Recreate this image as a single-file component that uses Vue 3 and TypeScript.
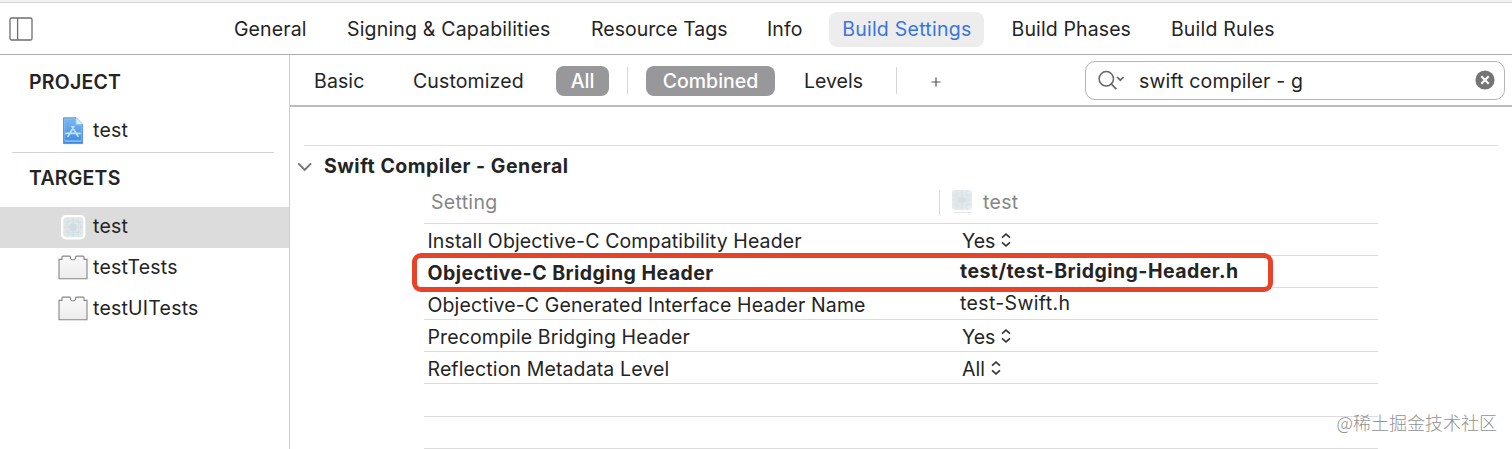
<script setup lang="ts">
interface Tab { label: string; key: string; active?: boolean }
interface Setting { name: string; value: string; popup: boolean; strong?: boolean; key: string }

const tabs: Tab[] = [
  { label: 'General', key: 'general' },
  { label: 'Signing & Capabilities', key: 'signing' },
  { label: 'Resource Tags', key: 'resource' },
  { label: 'Info', key: 'info' },
  { label: 'Build Settings', key: 'settings', active: true },
  { label: 'Build Phases', key: 'phases' },
  { label: 'Build Rules', key: 'rules' },
]

const settings: Setting[] = [
  { name: 'Install Objective-C Compatibility Header', value: 'Yes', popup: true, key: 'install' },
  { name: 'Objective-C Bridging Header', value: 'test/test-Bridging-Header.h', popup: false, strong: true, key: 'bridging' },
  { name: 'Objective-C Generated Interface Header Name', value: 'test-Swift.h', popup: false, key: 'generated' },
  { name: 'Precompile Bridging Header', value: 'Yes', popup: true, key: 'precompile' },
  { name: 'Reflection Metadata Level', value: 'All', popup: true, key: 'reflection' },
]

const bundles: string[] = ['testTests', 'testUITests']
</script>

<template>
  <div class="window">
    <header class="topbar">
      <svg class="panel-icon" width="24" height="24" viewBox="0 0 24 24" fill="none" stroke="#6f6f6f" stroke-width="1.3">
        <rect x="1" y="1" width="22" height="22" rx="1.6" />
        <path d="M8.6 1v22" />
      </svg>
      <nav class="tabs">
        <span v-for="t in tabs" :key="t.key" class="tab" :class="[t.key, { active: t.active }]">{{ t.label }}</span>
      </nav>
    </header>

    <div class="body">
      <aside class="sidebar">
        <div class="heading project">PROJECT</div>
        <div class="item first">
          <svg class="icon" width="28" height="28" viewBox="0 0 28 28">
            <defs>
              <linearGradient id="doc" x1="0" y1="0" x2="0" y2="1">
                <stop offset="0" stop-color="#7dbaf0" />
                <stop offset="1" stop-color="#3a88e0" />
              </linearGradient>
            </defs>
            <path d="M4.5 .8h12.8l6.3 6.4v19.4H4.5z" fill="url(#doc)" stroke="#4c88c8" stroke-width=".8" />
            <path d="M5.7 2h10.9v6.2h5.8v15.6H5.7z" fill="none" stroke="#8fc4f5" stroke-width=".6" />
            <path d="M17.3.8v6.4h6.3z" fill="#dcecfb" />
            <path d="M5.6 24.2h17" stroke="#a9d0f5" stroke-width=".9" />
            <path d="M14.8 9.6 9 19.4M13 9.6 19 19.4M7 16.4h14" fill="none" stroke="#c6e2fb" stroke-width="1.7" stroke-linecap="round" />
          </svg>
          <span>test</span>
        </div>
        <div class="separator"></div>
        <div class="heading targets">TARGETS</div>
        <div class="item selected">
          <svg class="icon" width="28" height="28" viewBox="0 0 28 28">
            <rect x="2" y="2" width="24.4" height="24.4" rx="5" fill="#fff" />
            <rect x="4.2" y="4.2" width="20" height="20" rx="3" fill="#e2e8ea" />
            <g fill="none" stroke="#cfdbe0" stroke-width=".6">
              <path d="M4.2 9h20M4.2 19.4h20M9 4.2v20M19.4 4.2v20M14.2 4.2v20M4.2 14.2h20" />
              <circle cx="14.2" cy="14.2" r="7.5" /><circle cx="14.2" cy="14.2" r="4" />
            </g>
            <rect x="11" y="11" width="6.4" height="6.4" rx="2" fill="#cfdbe0" />
          </svg>
          <span>test</span>
        </div>
        <div v-for="b in bundles" :key="b" class="item bundle">
          <svg class="brick" width="30" height="25" viewBox="0 0 30 25">
            <defs>
              <linearGradient id="brick" x1="0" y1="0" x2="0" y2="1">
                <stop offset="0" stop-color="#fafafa" />
                <stop offset="1" stop-color="#ececec" />
              </linearGradient>
            </defs>
            <path d="M1 4.4h3V2.1Q4 1.1 5 1.1h6.5q1 0 1 1v1.5l1.2 1.2h2.6l1.2-1.2V2.1q0-1 1-1H25q1 0 1 1v2.3h3v19.4H1z" fill="url(#brick)" stroke="#858585" stroke-width="1.1" />
          </svg>
          <span>{{ b }}</span>
        </div>
      </aside>

      <main class="editor">
        <div class="filters">
          <span class="filter basic">Basic</span>
          <span class="filter customized">Customized</span>
          <span class="pill all">All</span>
          <i class="bar"></i>
          <span class="pill combined">Combined</span>
          <span class="filter levels">Levels</span>
          <i class="bar"></i>
          <svg class="plus" width="10" height="10" viewBox="0 0 10 10"><path d="M5 .5v9M.5 5h9" stroke="#555" stroke-width="1.2" /></svg>
          <div class="search">
            <svg class="lens" width="28" height="22" viewBox="0 0 28 22" fill="none" stroke="#666">
              <circle cx="9.3" cy="9.8" r="7.2" stroke-width="1.5" />
              <path d="m14.4 15 4.9 5.2" stroke-width="1.8" />
              <path d="m20 8 3.3 3.2L26.6 8" stroke-width="1.7" />
            </svg>
            <span class="query">swift compiler - g</span>
            <svg class="clear" width="20" height="20" viewBox="0 0 20 20">
              <circle cx="10" cy="10" r="9.6" fill="#757575" />
              <path d="m6.3 6.3 7.4 7.4M13.7 6.3l-7.4 7.4" stroke="#fff" stroke-width="2" />
            </svg>
          </div>
        </div>

        <div class="section-title">
          <svg width="16" height="10" viewBox="0 0 16 10"><path d="m1.3 1.3 6.4 6.6 6.4-6.6" fill="none" stroke="#737373" stroke-width="1.9" /></svg>
          <span class="title">Swift Compiler - General</span>
        </div>

        <div class="table">
          <div class="row head">
            <span class="name">Setting</span>
            <span class="target">
              <svg width="22" height="24" viewBox="0 0 22 24">
                <rect x="1" y="0" width="20" height="20" rx="3" fill="#e6ecee" />
                <g fill="none" stroke="#d3dfe3" stroke-width=".6">
                  <path d="M1 5h20M1 15h20M6 0v20M16 0v20M11 0v20M1 10h20" />
                  <circle cx="11" cy="10" r="7.5" /><circle cx="11" cy="10" r="4" />
                </g>
                <rect x="8" y="7" width="6" height="6" rx="2" fill="#d5e0e4" />
                <path d="M2 22.5h18" stroke="#e6e6e6" />
              </svg>
              <span class="target-name">test</span>
            </span>
          </div>
          <div v-for="s in settings" :key="s.key" class="row" :class="{ strong: s.strong }">
            <span class="name">{{ s.name }}</span>
            <span class="value" :class="{ popup: s.popup }">
              <span>{{ s.value }}</span>
              <svg v-if="s.popup" width="10" height="14" viewBox="0 0 10 14"><path d="m1 4.6 4-3.5 4 3.5M1 9.4l4 3.5 4-3.5" fill="none" stroke="#333" stroke-width="1.6" /></svg>
            </span>
            <i v-if="s.strong" class="highlight"></i>
          </div>
          <div class="row"></div>
          <div class="row"></div>
        </div>
      </main>
    </div>
    <div class="watermark">@稀土掘金技术社区</div>
  </div>
</template>

<style>
body { margin: 0; overflow: hidden; }
</style>

<style scoped>
.window {
  position: relative; width: 1512px; height: 449px; overflow: hidden; box-sizing: border-box;
  background: #fff; color: #242424; font: 19.5px/24px Inter, "Noto Sans CJK SC", sans-serif; letter-spacing: .12px;
  border-top: 2px solid #f3f3f3; white-space: nowrap; display: flex; flex-direction: column;
}
svg { display: block; flex: none; }
.topbar {
  height: 53px; box-sizing: border-box; border-top: 1px solid #d4d4d4; border-bottom: 1px solid #adadad;
  display: flex; align-items: center; padding-left: 9px; flex: none; padding-top: 1px;
}
.tabs { display: flex; margin-left: 188.3px; gap: 14.5px; }
.tab { height: 35px; line-height: 34px; box-sizing: border-box; text-align: center; border-radius: 8px; }
.tab.general { width: 98px; }
.tab.signing { width: 230px; letter-spacing: .18px; }
.tab.resource { width: 162px; letter-spacing: 0; }
.tab.info { width: 60px; }
.tab.settings { width: 155px; letter-spacing: .25px; }
.tab.phases { width: 145px; }
.tab.rules { width: 129px; letter-spacing: .2px; }
.tab.active { background: #ededee; color: #3a75dd; }

.body { display: flex; flex: 1; min-height: 0; }
.sidebar { width: 289px; border-right: 1px solid #cfcfcf; flex: none; }
.heading { font-weight: 600; padding-left: 29px; height: 24px; letter-spacing: .22px; }
.project { margin-top: 15px; }
.item { height: 41px; line-height: 39px; display: flex; align-items: center; }
.item span { height: 41px; letter-spacing: .22px; }
.item .icon { margin-left: 58.5px; margin-right: 6.5px; margin-top: -2px; }
.first { margin-top: 17px; }
.separator { height: 1px; background: #d2d2d2; margin: 0 15px 0 12px; }
.targets { margin-top: 13px; }
.selected { background: #dcdcdc; margin-top: 17px; }
.brick { margin-left: 58px; margin-right: 5px; margin-top: -2px; }

.editor { flex: 1; min-width: 0; }
.filters { height: 52px; box-sizing: border-box; border-bottom: 2px solid #bdbdbd; display: flex; align-items: center; padding-left: 24px; padding-top: 1px; }
.basic { width: 99px; }
.customized { width: 143px; }
.pill { height: 30px; line-height: 30px; border-radius: 8px; background: #98979a; color: #fff; text-align: center; font-weight: 500; letter-spacing: 0; }
.all { width: 53px; }
.combined { width: 129px; margin-left: 18px; }
.bar { width: 1px; height: 27px; background: #d6d6d6; margin-left: 18px; }
.levels { margin-left: 29px; width: 74px; letter-spacing: 0; }
.plus { margin-left: 34px; margin-top: 2px; }
.search { margin-left: auto; margin-right: 7px; width: 420px; height: 39px; margin-top: -1px; box-sizing: border-box; border: 1px solid #b5b5b5; border-radius: 10px; display: flex; align-items: center; padding: 0 9px 0 11px; }
.query { margin-left: 14px; padding-top: 1px; letter-spacing: .15px; }
.clear { margin-left: auto; }

.section-title { margin: 38px 14px 0; border-top: 1px solid #dedede; height: 42px; padding-bottom: 2px; box-sizing: border-box; display: flex; align-items: center; font-weight: 700; letter-spacing: .5px; }
.section-title svg { margin-left: -7px; margin-top: 2px; }
.title { margin-left: 11px; }

.table { margin-left: 134px; width: 954px; }
.row { height: 32.1px; box-sizing: border-box; border-bottom: 1px solid #dcdcdc; display: flex; align-items: center; position: relative; }
.row.head { height: 37px; color: #868686; letter-spacing: .3px; }
.name { width: 515px; padding-left: 3.5px; box-sizing: border-box; padding-top: 2px; }
.head .name { padding-left: 7px; padding-top: 0; margin-top: -6px; }
.target { display: flex; align-items: center; height: 25px; border-left: 1px solid #d8d8d8; padding-left: 11px; margin-top: -6px; }
.target-name { margin-left: 10px; }
.value { padding-left: 21px; display: flex; align-items: center; margin-top: -2px; letter-spacing: .35px; }
.value.popup { padding-left: 23px; padding-top: 2px; margin-top: 0; letter-spacing: 0; }
.value svg { margin-left: 6px; margin-top: -1px; }
.strong, .strong .value { font-weight: 700; letter-spacing: .45px; }
.highlight { position: absolute; left: -12px; top: -3px; width: 861px; height: 39px; box-sizing: border-box; border: 5px solid #e64329; border-radius: 9px; }
.watermark { position: absolute; right: 15px; bottom: 14px; font: 300 18px/26px "Noto Sans CJK SC", sans-serif; letter-spacing: 0; color: #929292; }
</style>
